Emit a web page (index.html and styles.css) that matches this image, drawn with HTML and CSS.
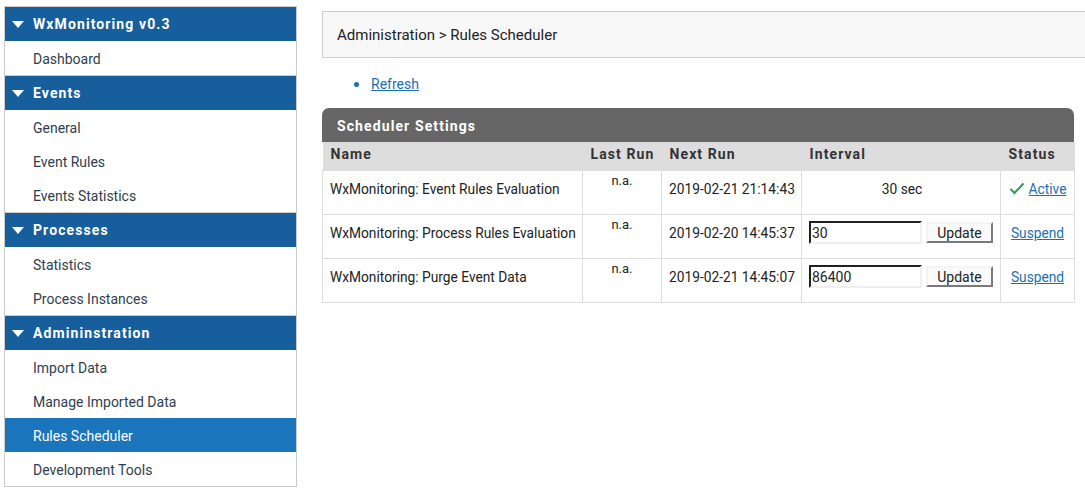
FILE: index.html
```html
<!DOCTYPE html>
<html>
<head>
<meta charset="utf-8">
<link rel="stylesheet" href="styles.css">
</head>
<body>
<div class="page">
  <nav class="sidebar">
    <div class="group">
      <div class="group-head"><span class="tri"></span>WxMonitoring v0.3</div>
      <a class="item">Dashboard</a>
    </div>
    <div class="group">
      <div class="group-head"><span class="tri"></span>Events</div>
      <a class="item">General</a>
      <a class="item">Event Rules</a>
      <a class="item">Events Statistics</a>
    </div>
    <div class="group">
      <div class="group-head"><span class="tri"></span>Processes</div>
      <a class="item">Statistics</a>
      <a class="item">Process Instances</a>
    </div>
    <div class="group">
      <div class="group-head"><span class="tri"></span>Admininstration</div>
      <a class="item">Import Data</a>
      <a class="item">Manage Imported Data</a>
      <a class="item active">Rules Scheduler</a>
      <a class="item">Development Tools</a>
    </div>
  </nav>
  <main class="main">
    <div class="breadcrumb">Administration &gt; Rules Scheduler</div>
    <ul class="actions">
      <li><a href="#" class="link">Refresh</a></li>
    </ul>
    <section class="panel">
      <div class="panel-head">Scheduler Settings</div>
      <table class="grid">
        <colgroup>
          <col class="c-name"><col class="c-last"><col class="c-next"><col class="c-int"><col class="c-status">
        </colgroup>
        <thead>
          <tr><th>Name</th><th>Last Run</th><th>Next Run</th><th>Interval</th><th>Status</th></tr>
        </thead>
        <tbody>
          <tr>
            <td>WxMonitoring: Event Rules Evaluation</td>
            <td class="na">n.a.</td>
            <td>2019-02-21 21:14:43</td>
            <td class="interval-text">30 sec</td>
            <td class="status"><svg class="check" width="16" height="13" viewBox="0 0 16 13"><path d="M1.5 7 L5.5 11 L14.5 1.5" fill="none" stroke="#23a050" stroke-width="2"/></svg><a href="#" class="link">Active</a></td>
          </tr>
          <tr>
            <td>WxMonitoring: Process Rules Evaluation</td>
            <td class="na">n.a.</td>
            <td>2019-02-20 14:45:37</td>
            <td class="interval"><input class="field" type="text" value="30"><button class="btn">Update</button></td>
            <td class="status"><a href="#" class="link">Suspend</a></td>
          </tr>
          <tr>
            <td>WxMonitoring: Purge Event Data</td>
            <td class="na">n.a.</td>
            <td>2019-02-21 14:45:07</td>
            <td class="interval"><input class="field" type="text" value="86400"><button class="btn">Update</button></td>
            <td class="status"><a href="#" class="link">Suspend</a></td>
          </tr>
        </tbody>
      </table>
    </section>
  </main>
</div>
</body>
</html>
```

FILE: styles.css
```css
* { box-sizing: border-box; }
html, body { margin: 0; padding: 0; background: #fff; }
body {
  font-family: Roboto, "Liberation Sans", Arial, sans-serif;
  font-size: 14px;
  color: #222;
  overflow: hidden;
}
.page {
  display: flex;
  align-items: flex-start;
  padding: 6px 0 0 4px;
}
.sidebar {
  width: 293px;
  flex: none;
  border: 1px solid #cccccc;
  background: #fff;
}
.group + .group { border-top: 1px solid #cccccc; }
.group-head {
  height: 34px;
  display: flex;
  align-items: center;
  background: #175e9c;
  color: #fff;
  font-weight: bold;
  letter-spacing: 1.1px;
  padding-left: 7px;
}
.tri {
  width: 0; height: 0;
  border-left: 6px solid transparent;
  border-right: 6px solid transparent;
  border-top: 7px solid #fff;
  margin-right: 9px;
}
.item {
  display: flex;
  align-items: center;
  height: 34px;
  padding-left: 28px;
  padding-top: 1px;
  color: #2f3e4e;
  text-decoration: none;
}
.item.active { background: #1a75bc; color: #fff; }

.main {
  margin-left: 25px;
  margin-top: 5px;
  width: 752px;
  flex: none;
}
.breadcrumb {
  width: 780px;
  height: 47px;
  background: #f8f8f8;
  border: 1px solid #cccccc;
  display: flex;
  align-items: center;
  padding-left: 14px;
  font-size: 15px;
  color: #222;
}
.actions {
  margin: 18px 0 0 0;
  padding: 0 0 0 49px;
  line-height: 17px;
}
.actions li { list-style: none; position: relative; }
.actions li::before {
  content: "";
  position: absolute;
  left: -17px;
  top: 6px;
  width: 5px;
  height: 5px;
  border-radius: 50%;
  background: #1a6fb5;
}
.link { color: #1a6fb5; text-decoration: underline; }

.panel { margin-top: 15px; }
.panel-head {
  height: 34px;
  background: #666666;
  border-radius: 7px 7px 0 0;
  color: #fff;
  font-weight: bold;
  letter-spacing: 1.1px;
  display: flex;
  align-items: center;
  padding-left: 15px;
  padding-top: 2px;
}
.grid {
  width: 752px;
  border-collapse: collapse;
  table-layout: fixed;
}
.c-name { width: 260px; }
.c-last { width: 79px; }
.c-next { width: 140px; }
.c-int { width: 199px; }
.c-status { width: 74px; }
.grid th {
  background: #dddddd;
  height: 28px;
  text-align: left;
  padding: 0 0 4px 8px;
  font-weight: bold;
  letter-spacing: 1.1px;
  color: #333;
  white-space: nowrap;
}
.grid td {
  height: 44px;
  border: 1px solid #dddddd;
  padding: 4px 8px 11px 7px;
  vertical-align: middle;
  white-space: nowrap;
  font-size: 13.75px;
  color: #222;
}
.grid td.na {
  vertical-align: top;
  text-align: center;
  font-size: 13px;
  padding: 2px 4px 0;
}
.grid td.interval-text { text-align: center; padding-left: 10px; }
.grid td.interval { padding-left: 7px; padding-right: 4px; }
.grid td.status { text-align: center; padding-left: 4px; padding-right: 4px; }
.check { vertical-align: -1px; margin-right: 4px; }
.field {
  width: 113px;
  height: 23px;
  border: 2px inset #e0e0e0;
  border-top-color: #767676;
  border-left-color: #767676;
  border-right-color: #efefef;
  border-bottom-color: #efefef;
  font: 14px Roboto, "Liberation Sans", Arial, sans-serif;
  color: #222;
  padding: 1px 1px;
  vertical-align: middle;
  margin: 0;
}
.btn {
  width: 67px;
  height: 21px;
  margin-left: 4px;
  border: 2px solid #7a7a7a;
  border-top-color: #f4f4f4;
  border-left-color: #f4f4f4;
  background: #fafafa;
  font: 14px Roboto, "Liberation Sans", Arial, sans-serif;
  color: #222;
  padding: 0;
  vertical-align: middle;
}
```
